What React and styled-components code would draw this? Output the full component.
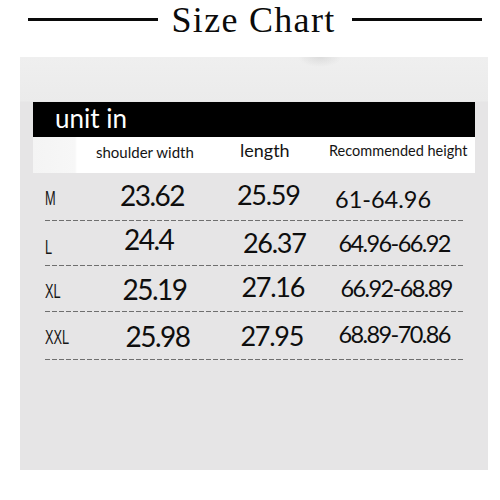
import React from "react";
import styled, { createGlobalStyle } from "styled-components";

const GlobalStyle = createGlobalStyle`
  html, body {
    margin: 0;
    padding: 0;
    background: #fff;
  }
  body {
    width: 500px;
    height: 500px;
    overflow: hidden;
    font-family: "Lato", "Liberation Sans", sans-serif;
  }
`;

const Page = styled.div`
  width: 500px;
  height: 500px;
  background: #fff;
`;

const TitleRow = styled.div`
  height: 57px;
  display: flex;
  justify-content: center;
  align-items: flex-start;
  padding-left: 10px;
  box-sizing: border-box;
`;

const Rule = styled.div`
  width: 130px;
  height: 3px;
  margin-top: 18px;
  background: #0a0a0a;
`;

const Title = styled.h1`
  margin: 2px ${(p) => p.$right}px 0 14px;
  font-family: "Liberation Serif", "Times New Roman", serif;
  font-weight: normal;
  font-size: 36px;
  line-height: 1;
  letter-spacing: 1.3px;
  color: #0b0b0b;
  white-space: nowrap;
`;

const Panel = styled.div`
  margin: 0 12px 0 20px;
  height: 413px;
  padding: 45px 13px 0 13px;
  box-sizing: border-box;
  background:
    radial-gradient(ellipse 22px 10px at 300px 0, rgba(120, 120, 120, 0.16), rgba(120, 120, 120, 0) 100%),
    linear-gradient(to bottom, #efefef 0, #ebebeb 44px, #e6e5e6 45px, #e6e5e6 100%);
`;

const Banner = styled.div`
  height: 35px;
  background: #000;
  color: #fff;
  font-size: 26px;
  line-height: 1;
  padding: 3px 0 0 22px;
  box-sizing: border-box;
`;

const Grid = styled.div`
  display: grid;
  grid-template-columns: 62px 130px 95px 155px;
  height: ${(p) => p.$h}px;
`;

const HeaderGrid = styled(Grid)`
  background: linear-gradient(to right, #f4f4f4 0, #f7f7f7 42px, #fff 44px);
`;

const HeadCell = styled.div`
  padding: ${(p) => p.$top}px 0 0 ${(p) => p.$x}px;
  font-size: ${(p) => p.$size}px;
  line-height: 1;
  color: #141414;
  white-space: nowrap;
`;

const SizeCell = styled.div`
  padding: ${(p) => p.$top}px 0 0 12px;
`;

const SizeLabel = styled.span`
  display: inline-block;
  font-family: "Liberation Sans", Arial, sans-serif;
  font-size: 20px;
  line-height: 1;
  color: #161616;
  transform: scaleX(0.64);
  transform-origin: left top;
`;

const Value = styled.div`
  padding: ${(p) => p.$top}px 0 0 ${(p) => p.$x}px;
  font-size: ${(p) => p.$size}px;
  letter-spacing: ${(p) => p.$ls}px;
  line-height: 1;
  color: #0e0e0e;
  white-space: nowrap;
`;

const Dash = styled.div`
  height: 1px;
  margin: 0 12px;
  background: repeating-linear-gradient(to right, #6f6f6f 0 5px, transparent 5px 7px);
`;

const rows = [
  {
    size: "M",
    h: 47,
    top: 15,
    cells: [
      ["23.62", 25, 8],
      ["25.59", 12, 7.5],
      ["61-64.96", 15, 15, 0],
    ],
  },
  {
    size: "L",
    h: 44,
    top: 16,
    cells: [
      ["24.4", 29, 4],
      ["26.37", 18, 7.5],
      ["64.96-66.92", 18.5, 11, -1.6],
    ],
  },
  {
    size: "XL",
    h: 45,
    top: 15,
    cells: [
      ["25.19", 27.5, 9],
      ["27.16", 16.5, 6.5],
      ["66.92-68.89", 20.5, 11, -1.6],
    ],
  },
  {
    size: "XXL",
    h: 47,
    top: 15,
    cells: [
      ["25.98", 30.5, 10],
      ["27.95", 15.5, 9.5],
      ["68.89-70.86", 18.5, 11, -1.6],
    ],
  },
];

// font size and tracking per column
const columnType = [
  { size: 28, ls: -1.5 },
  { size: 27, ls: -1.3 },
  { size: 23.5, ls: 0 },
];

const SizeRow = ({ size, h, top, cells }) => (
  <>
    <Grid $h={h}>
      <SizeCell $top={top}>
        <SizeLabel>{size}</SizeLabel>
      </SizeCell>
      {cells.map(([text, x, t, ls], i) => (
        <Value
          key={i}
          $x={x}
          $top={t}
          $size={columnType[i].size}
          $ls={ls !== undefined ? ls : columnType[i].ls}
        >
          {text}
        </Value>
      ))}
    </Grid>
    <Dash />
  </>
);

export default function App() {
  return (
    <Page>
      <GlobalStyle />
      <TitleRow>
        <Rule />
        <Title $right={17}>Size Chart</Title>
        <Rule />
      </TitleRow>
      <Panel>
        <Banner>unit in</Banner>
        <HeaderGrid $h={36}>
          <div />
          <HeadCell $x={1} $top={7.5} $size={15}>
            shoulder width
          </HeadCell>
          <HeadCell $x={15} $top={4} $size={18}>
            length
          </HeadCell>
          <HeadCell $x={9} $top={7} $size={14.5}>
            Recommended height
          </HeadCell>
        </HeaderGrid>
        {rows.map((r) => (
          <SizeRow key={r.size} {...r} />
        ))}
      </Panel>
    </Page>
  );
}
